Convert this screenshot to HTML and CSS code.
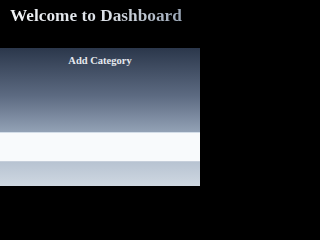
FILE: index.html
```html
<!DOCTYPE html>
<html>
<head>
<meta charset="utf-8">
<link rel="stylesheet" href="styles.css">
</head>
<body>
<header class="top">
  <h1 class="title">Welcome to Dashboard</h1>
</header>
<section class="panel">
  <h2 class="panel-title">Add Category</h2>
  <input class="field" type="text">
</section>
</body>
</html>
```
FILE: styles.css
```css
html, body {
  margin: 0;
  padding: 0;
  background: #000;
}
body {
  font-family: "Liberation Serif", "DejaVu Serif", serif;
  width: 200px;
  overflow: hidden;
}
.top {
  height: 48px;
  box-sizing: border-box;
  padding: 6px 0 0 10px;
}
.title {
  margin: 0;
  font-size: 17.3px;
  font-weight: 700;
  line-height: 20px;
  white-space: nowrap;
  display: inline-block;
  background: linear-gradient(90deg, #f1f3f6 0%, #d9dee5 60%, #9aa6b6 100%);
  -webkit-background-clip: text;
  background-clip: text;
  color: transparent;
}
.panel {
  height: 138px;
  box-sizing: border-box;
  background: linear-gradient(180deg, #2b374b 0%, #5d6b82 35%, #95a4b8 62%, #b4c0cf 80%, #cfd8e2 100%);
  padding-top: 6px;
  display: flex;
  flex-direction: column;
  align-items: stretch;
}
.panel-title {
  margin: 0;
  text-align: center;
  font-size: 10.5px;
  font-weight: 700;
  line-height: 14px;
  color: #e5e9ef;
}
.field {
  margin-top: 64px;
  height: 30px;
  box-sizing: border-box;
  border: none;
  border-top: 1px solid #d3dde8;
  border-bottom: 1px solid #c6cfdb;
  background: #f8fafc;
  padding: 0;
  width: 100%;
}
```
